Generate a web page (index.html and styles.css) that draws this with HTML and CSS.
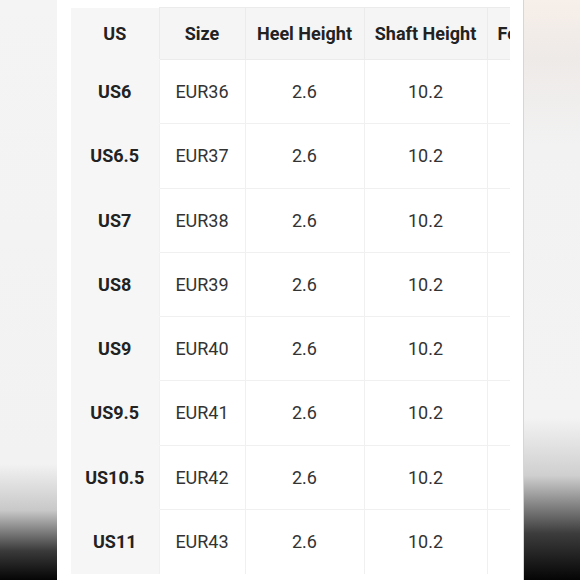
FILE: index.html
```html
<!DOCTYPE html>
<html>
<head>
<meta charset="utf-8">
<link rel="stylesheet" href="styles.css">
</head>
<body>
<div class="frame">
  <div class="side side-left"></div>
  <div class="panel">
    <div class="clip">
      <table class="chart">
        <colgroup>
          <col class="c-us"><col class="c-size"><col class="c-heel"><col class="c-shaft"><col class="c-foot">
        </colgroup>
        <thead>
          <tr><th class="first">US</th><th>Size</th><th>Heel Height</th><th>Shaft Height</th><th class="last">Foot Length</th></tr>
        </thead>
        <tbody>
          <tr><th class="first">US6</th><td>EUR36</td><td>2.6</td><td>10.2</td><td class="last"></td></tr>
          <tr><th class="first">US6.5</th><td>EUR37</td><td>2.6</td><td>10.2</td><td class="last"></td></tr>
          <tr><th class="first">US7</th><td>EUR38</td><td>2.6</td><td>10.2</td><td class="last"></td></tr>
          <tr><th class="first">US8</th><td>EUR39</td><td>2.6</td><td>10.2</td><td class="last"></td></tr>
          <tr><th class="first">US9</th><td>EUR40</td><td>2.6</td><td>10.2</td><td class="last"></td></tr>
          <tr><th class="first">US9.5</th><td>EUR41</td><td>2.6</td><td>10.2</td><td class="last"></td></tr>
          <tr><th class="first">US10.5</th><td>EUR42</td><td>2.6</td><td>10.2</td><td class="last"></td></tr>
          <tr><th class="first">US11</th><td>EUR43</td><td>2.6</td><td>10.2</td><td class="last"></td></tr>
        </tbody>
      </table>
    </div>
  </div>
  <div class="side side-right"></div>
</div>
</body>
</html>
```
FILE: styles.css
```css
html, body {
  margin: 0;
  padding: 0;
  width: 580px;
  height: 580px;
  overflow: hidden;
  background: #f3f3f3;
}
.frame {
  display: flex;
  width: 580px;
  height: 580px;
  font-family: Roboto, "Liberation Sans", sans-serif;
}
.side {
  flex: 0 0 57px;
  height: 580px;
}
.side-left {
  background: linear-gradient(to bottom, #f4f4f4 0%, #f2f2f2 80%, #c8c8c8 88%, #3a3a3a 95%, #050505 100%);
}
.side-right {
  border-left: 1px solid #d6d6d6;
  flex-basis: 56px;
  background: linear-gradient(to bottom, #f7efe9 0%, #eeeae8 10%, #f2f2f2 25%, #f3f3f3 72%, #cfcfcf 82%, #3c3c3c 92%, #050505 100%);
}
.panel {
  flex: 0 0 466px;
  background: #ffffff;
  padding: 7px 0 0 14px;
  box-sizing: border-box;
}
.clip {
  width: 439px;
  height: 568px;
  overflow: hidden;
}
.chart {
  border-collapse: collapse;
  table-layout: fixed;
  width: 540px;
  color: #2a2a2a;
  font-size: 18px;
}
.c-us { width: 88px; }
.c-size { width: 86px; }
.c-heel { width: 119px; }
.c-shaft { width: 123px; }
.c-foot { width: 124px; }
.chart th, .chart td {
  text-align: center;
  border: 1px solid #f0f0f0;
  padding: 0;
  white-space: nowrap;
}
.chart thead th {
  height: 51px;
  background: #f5f5f5;
  font-weight: 700;
  color: #222;
  border-color: #ebebeb;
}
.chart tbody tr {
  height: 64.25px;
}
.chart tbody th {
  font-weight: 700;
  color: #222;
}
.chart .first {
  background: #f6f6f6;
  border-left: none;
  border-top: none;
  border-bottom-color: #f6f6f6;
}
.chart td {
  font-weight: 400;
  color: #333;
}
.chart tbody tr:last-child th, .chart tbody tr:last-child td {
  border-bottom: none;
}
.chart .last {
  text-align: left;
  padding-left: 10px;
}
```
